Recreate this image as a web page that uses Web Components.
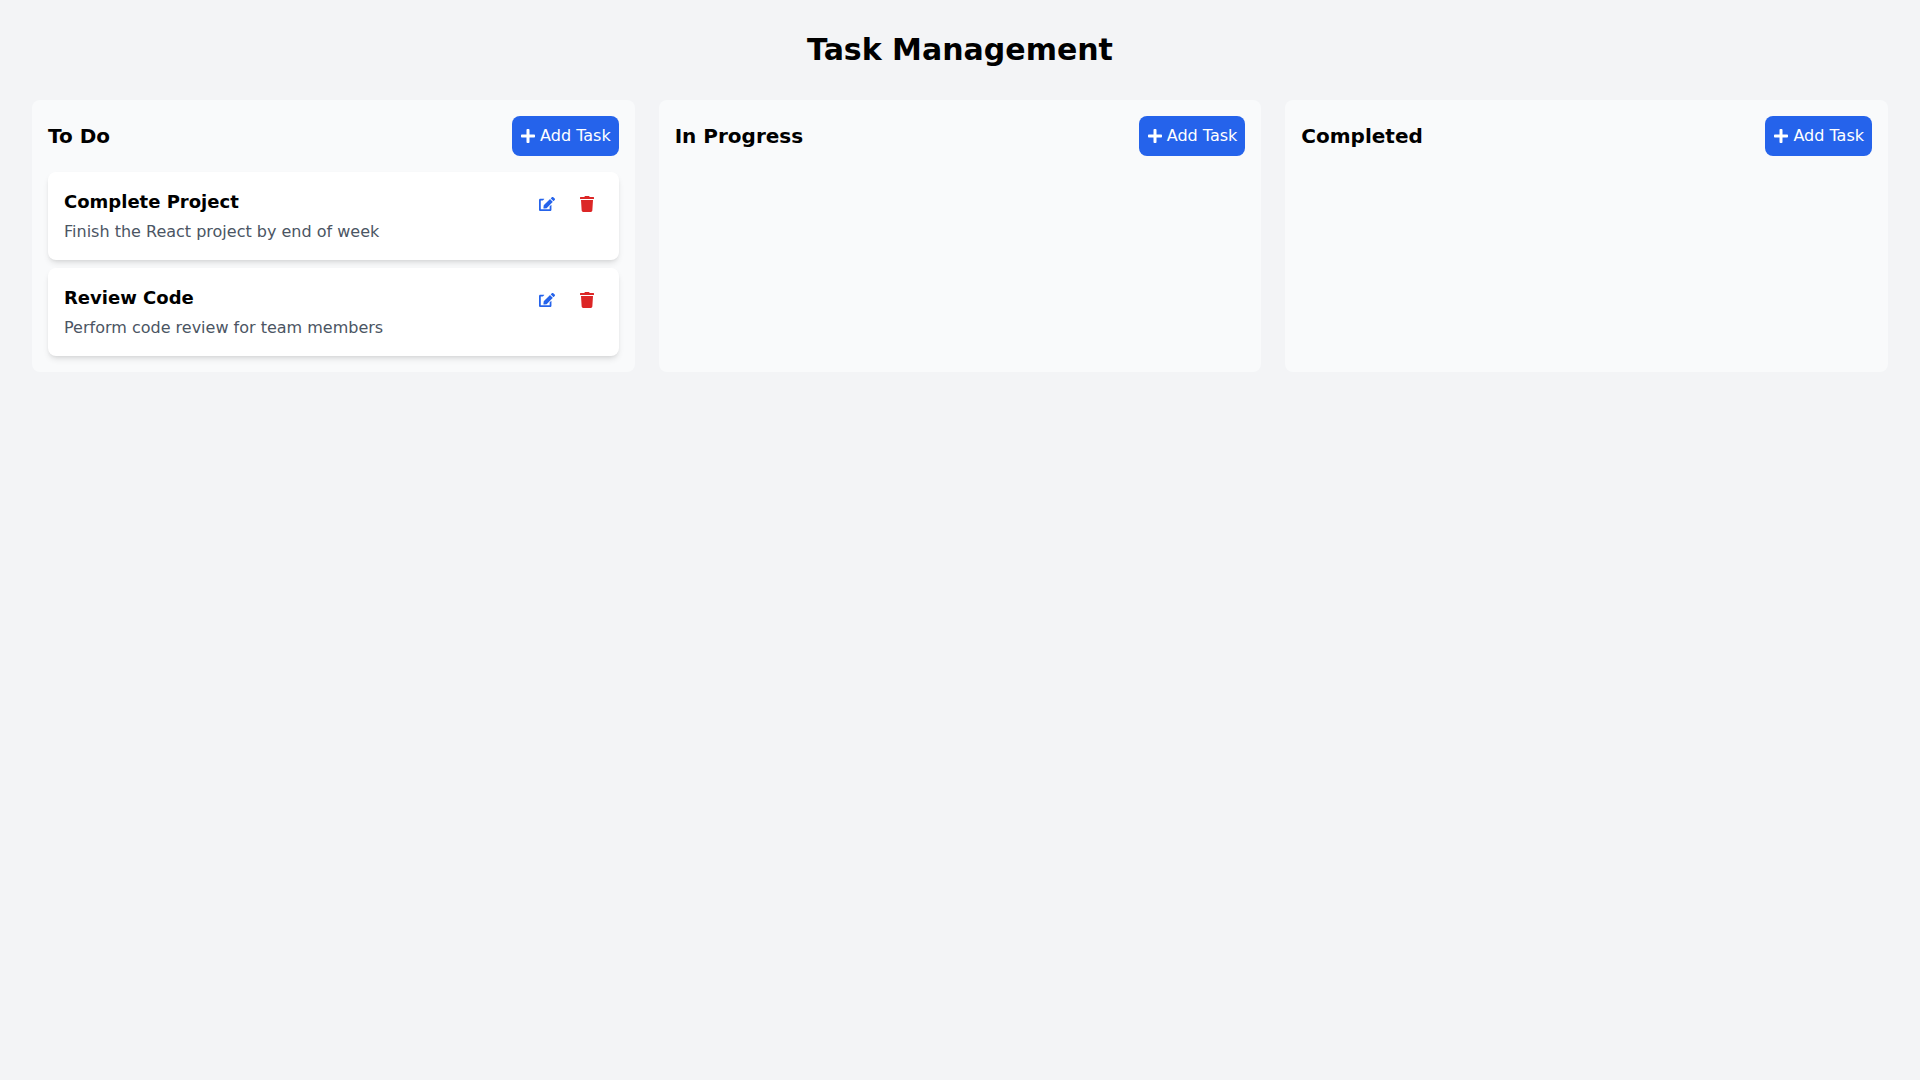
<!DOCTYPE html>
<html lang="en">
<head>
<meta charset="utf-8">
<title>Task Management</title>
<style>
  html, body { margin: 0; }
  body {
    background: #f3f4f6;
    color: #000;
    font-family: "DejaVu Sans", sans-serif;
    min-height: 100vh;
  }
</style>
</head>
<body>
<task-board heading="Task Management">
  <task-column heading="To Do">
    <task-card heading="Complete Project" description="Finish the React project by end of week"></task-card>
    <task-card heading="Review Code" description="Perform code review for team members"></task-card>
  </task-column>
  <task-column heading="In Progress"></task-column>
  <task-column heading="Completed"></task-column>
</task-board>

<script>
const ICONS = {
  plus: ['0 0 448 512', 'M416 208H272V64c0-17.67-14.33-32-32-32h-32c-17.67 0-32 14.33-32 32v144H32c-17.67 0-32 14.33-32 32v32c0 17.67 14.33 32 32 32h144v144c0 17.67 14.33 32 32 32h32c17.67 0 32-14.33 32-32V304h144c17.67 0 32-14.33 32-32v-32c0-17.67-14.33-32-32-32z'],
  edit: ['0 0 576 512', 'M402.6 83.2l90.2 90.2c3.8 3.8 3.8 10 0 13.8L274.4 405.6l-92.8 10.3c-12.4 1.4-22.9-9.1-21.5-21.5l10.3-92.8L388.8 83.2c3.8-3.8 10-3.8 13.8 0zm162-22.9l-48.8-48.8c-15.2-15.2-39.9-15.2-55.2 0l-35.4 35.4c-3.8 3.8-3.8 10 0 13.8l90.2 90.2c3.8 3.8 10 3.8 13.8 0l35.4-35.4c15.2-15.3 15.2-40 0-55.2zM384 346.2V448H64V128h73.1c3.2 0 6.2-1.3 8.5-3.5l40-40c7.6-7.6 2.2-20.5-8.5-20.5H48C21.5 64 0 85.5 0 112v352c0 26.5 21.5 48 48 48h352c26.5 0 48-21.5 48-48V306.2c0-10.7-12.9-16-20.5-8.5l-40 40c-2.2 2.3-3.5 5.3-3.5 8.5z'],
  trash: ['0 0 448 512', 'M432 32H312l-9.4-18.7A24 24 0 0 0 281.1 0H166.8a23.72 23.72 0 0 0-21.4 13.3L136 32H16A16 16 0 0 0 0 48v32a16 16 0 0 0 16 16h416a16 16 0 0 0 16-16V48a16 16 0 0 0-16-16zM53.2 467a48 48 0 0 0 47.9 45h245.8a48 48 0 0 0 47.9-45L416 128H32z'],
};

const icon = (name) => {
  const [box, d] = ICONS[name];
  return `<svg viewBox="${box}" width="16" height="16" fill="currentColor" aria-hidden="true"><path d="${d}"></path></svg>`;
};

class TaskBoard extends HTMLElement {
  constructor() {
    super();
    this.attachShadow({ mode: 'open' });
  }

  connectedCallback() {
    this.shadowRoot.innerHTML = `
      <style>
        :host { display: block; padding: 32px; }
        h1 {
          margin: 0 0 32px;
          font-size: 30px;
          line-height: 36px;
          font-weight: 700;
          text-align: center;
        }
        .columns {
          display: grid;
          grid-template-columns: repeat(3, minmax(0, 1fr));
          gap: 24px;
        }
      </style>
      <h1>${this.getAttribute('heading') || ''}</h1>
      <div class="columns"><slot></slot></div>
    `;
  }
}

class TaskColumn extends HTMLElement {
  constructor() {
    super();
    this.attachShadow({ mode: 'open' });
  }

  connectedCallback() {
    this.shadowRoot.innerHTML = `
      <style>
        :host {
          display: block;
          padding: 16px;
          background: #f9fafb;
          border-radius: 8px;
        }
        header {
          display: flex;
          justify-content: space-between;
          align-items: center;
          margin-bottom: 16px;
        }
        h2 {
          margin: 0;
          font-size: 20px;
          line-height: 28px;
          font-weight: 700;
        }
        .cards { display: flex; flex-direction: column; gap: 8px; }
      </style>
      <header>
        <h2>${this.getAttribute('heading') || ''}</h2>
        <add-button>Add Task</add-button>
      </header>
      <div class="cards"><slot></slot></div>
    `;
  }
}

class AddButton extends HTMLElement {
  constructor() {
    super();
    this.attachShadow({ mode: 'open' });
  }

  connectedCallback() {
    this.shadowRoot.innerHTML = `
      <style>
        :host { display: block; }
        button {
          display: flex;
          align-items: center;
          gap: 4px;
          margin: 0;
          padding: 8px;
          border: 0;
          border-radius: 8px;
          background: #2563eb;
          color: #fff;
          font: inherit;
          font-size: 16px;
          line-height: 24px;
          cursor: pointer;
        }
        svg { display: block; }
      </style>
      <button type="button">${icon('plus')}<slot></slot></button>
    `;
  }
}

class TaskCard extends HTMLElement {
  constructor() {
    super();
    this.attachShadow({ mode: 'open' });
  }

  connectedCallback() {
    this.shadowRoot.innerHTML = `
      <style>
        :host {
          display: flex;
          justify-content: space-between;
          align-items: flex-start;
          padding: 16px;
          background: #fff;
          border-radius: 8px;
          box-shadow: 0 4px 6px -1px rgba(0,0,0,.1), 0 2px 4px -2px rgba(0,0,0,.1);
        }
        h3 {
          margin: 0;
          font-size: 18px;
          line-height: 28px;
          font-weight: 700;
        }
        p {
          margin: 4px 0 0;
          font-size: 16px;
          line-height: 24px;
          color: #4b5563;
        }
        .actions { display: flex; gap: 8px; }
        button {
          display: block;
          margin: 0;
          padding: 8px;
          border: 0;
          background: none;
          cursor: pointer;
        }
        svg { display: block; }
        .edit { color: #2563eb; }
        .delete { color: #dc2626; }
      </style>
      <div>
        <h3>${this.getAttribute('heading') || ''}</h3>
        <p>${this.getAttribute('description') || ''}</p>
      </div>
      <div class="actions">
        <button class="edit" type="button" aria-label="Edit">${icon('edit')}</button>
        <button class="delete" type="button" aria-label="Delete">${icon('trash')}</button>
      </div>
    `;
  }
}

customElements.define('add-button', AddButton);
customElements.define('task-card', TaskCard);
customElements.define('task-column', TaskColumn);
customElements.define('task-board', TaskBoard);
</script>
</body>
</html>
